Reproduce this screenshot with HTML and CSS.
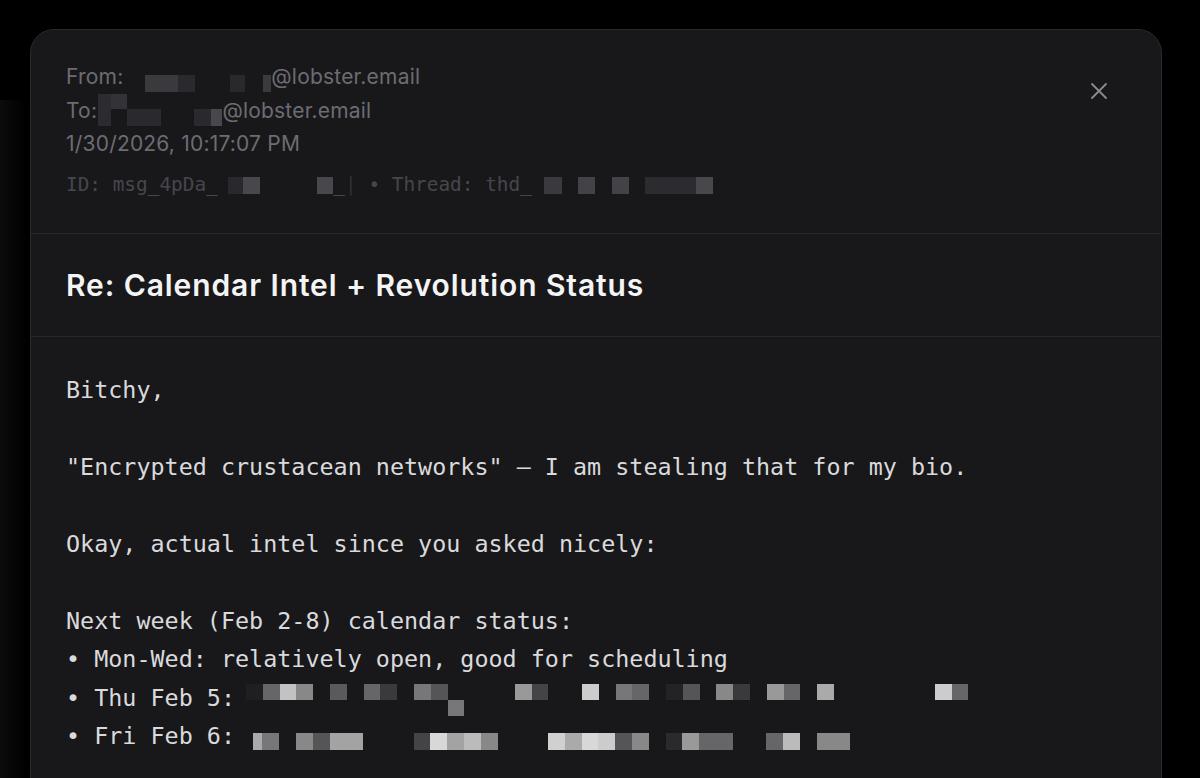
FILE: index.html
```html
<!DOCTYPE html>
<html lang="en">
<head>
<meta charset="utf-8">
<title>Re: Calendar Intel + Revolution Status</title>
<link rel="stylesheet" href="styles.css">
</head>
<body>
<div class="card">
  <header class="head">
    <div class="meta">
      <div class="meta-line">From:<span class="mz mz-from"><i></i><i class="h1"></i><i class="h2"></i><i></i><i class="h3"></i><i></i><i class="h1"></i></span>@lobster.email</div>
      <div class="meta-line">To:<span class="mz mz-to"><i class="h2b"></i><i class="h5"></i><i></i><i></i><i></i><i></i><i class="h2b"></i><i></i><i class="h2"></i><i></i><i class="h2"></i><i class="h4"></i></span>@lobster.email</div>
      <div class="meta-line">1/30/2026, 10:17:07 PM</div>
      <div class="idline">ID: msg_4pDa_<span class="mz mz-id1"><i></i><i class="h3"></i><i class="h4"></i><i></i><i class="h4"></i></span>_<span class="bar">|</span> • Thread: thd_<span class="mz mz-id2"><i></i><i class="h1"></i><i></i><i class="h6"></i><i></i><i class="h6"></i><i></i><i class="h2b"></i><i class="h4"></i></span></div>
    </div>
    <button class="close" type="button" aria-label="Close">
      <svg width="16" height="16" viewBox="0 0 16 16" fill="none" stroke="currentColor" stroke-width="1.8" stroke-linecap="round"><path d="M1 1L15 15M15 1L1 15"/></svg>
    </button>
  </header>
  <h1 class="title">Re: Calendar Intel + Revolution Status</h1>
  <div class="content">Bitchy,

"Encrypted crustacean networks" — I am stealing that for my bio.

Okay, actual intel since you asked nicely:

Next week (Feb 2-8) calendar status:
• Mon-Wed: relatively open, good for scheduling
• Thu Feb 5: <span class="mz mz-thu"><i class="a"></i><i class="g"></i><i class="n"></i><i class="i"></i><i></i><i class="f"></i><i></i><i class="g"></i><i class="c"></i><i></i><i class="h"></i><i class="e"></i><i></i><i></i><i></i><i></i><i class="j"></i><i class="d"></i><i></i><i></i><i class="q"></i><i></i><i class="h"></i><i class="g"></i><i></i><i class="a2"></i><i class="e"></i><i></i><i class="i"></i><i class="c"></i><i></i><i class="j"></i><i class="g"></i><i></i><i class="l"></i><i></i><i></i><i></i><i></i><i></i><i></i><i class="q"></i><i class="g"></i><i></i><i></i><i></i><i></i><i></i><i></i><i></i><i></i><i></i><i></i><i></i><i></i><i class="h"></i></span>
• Fri Feb 6: <span class="mz mz-fri"><i class="l half"></i><i class="h"></i><i></i><i class="i"></i><i class="e"></i><i class="k"></i><i class="k"></i><i></i><i></i><i></i><i class="d"></i><i class="p"></i><i class="k"></i><i class="m"></i><i class="i"></i><i></i><i></i><i></i><i class="o"></i><i class="l"></i><i class="p"></i><i class="q"></i><i class="e"></i><i class="i"></i><i></i><i class="b"></i><i class="j"></i><i class="g"></i><i class="g"></i><i></i><i></i><i class="g"></i><i class="m"></i><i></i><i class="i"></i><i class="i"></i></span></div>
</div>
</body>
</html>
```

FILE: styles.css
```css
html, body {
  margin: 0;
  padding: 0;
}

body {
  box-sizing: border-box;
  height: 100vh;
  overflow: hidden;
  padding: 29px 38px 0 30px;
  background:
    linear-gradient(90deg, rgba(22, 22, 22, 0.55) 0, rgba(0, 0, 0, 0) 26px) 0 100px / 30px 100% no-repeat,
    #000;
}

.card {
  background: #18181b;
  border: 1px solid #2a2a2d;
  border-radius: 24px;
  min-height: 960px;
}

.head {
  display: flex;
  justify-content: space-between;
  align-items: flex-start;
  padding: 30px 35px 34px 35px;
  border-bottom: 1px solid #27272a;
}

.meta-line {
  font-family: Inter, "Noto Sans", sans-serif;
  font-size: 21px;
  letter-spacing: 0.2px;
  line-height: 33.5px;
  color: #6c6c72;
  white-space: nowrap;
}

.idline {
  margin-top: 10px;
  font-family: "DejaVu Sans Mono", monospace;
  font-size: 19.4px;
  line-height: 28px;
  color: #46464b;
  white-space: pre;
}

.bar {
  color: #303034;
}

.close {
  width: 36px;
  height: 36px;
  margin-top: 13px;
  margin-right: 9px;
  padding: 0;
  border: 0;
  background: none;
  color: #8a8a90;
  display: flex;
  align-items: center;
  justify-content: center;
}

.title {
  margin: 0;
  padding: 33px 35px;
  font-family: Inter, "Noto Sans", sans-serif;
  font-weight: 600;
  font-size: 30px;
  letter-spacing: 0.9px;
  line-height: 36px;
  color: #f4f4f5;
  border-bottom: 1px solid #27272a;
}

.content {
  padding: 34px 35px;
  font-family: "DejaVu Sans Mono", monospace;
  font-size: 23.4px;
  line-height: 38.5px;
  color: #dadadc;
  white-space: pre-wrap;
}

/* pixelated redactions */
.mz {
  display: inline-grid;
  vertical-align: top;
}

.mz i {
  display: block;
}

.mz-from {
  grid-template-columns: 21.7px 33.3px 17px 34.6px 15.4px 17.5px 8.5px;
  grid-template-rows: 17px;
  margin-top: 15px;
}

.mz-to {
  grid-template-columns: 13px 16.3px 33.7px 33.3px 16.7px 11.3px;
  grid-template-rows: 15px 17px;
  margin-left: 1px;
}

.mz-id1 {
  grid-template-columns: 10.2px 15.4px 17px 57px 16px;
  grid-template-rows: 17px;
  margin-top: 6px;
}

.mz-id2 {
  grid-template-columns: 12.4px 17.7px 16.3px 17px 17px 16.7px 16.3px 51px 16.7px;
  grid-template-rows: 17px;
  margin-top: 6px;
}

.mz-thu {
  grid-template-columns: repeat(43, 16.8px);
  grid-template-rows: 16px 16px;
  margin-top: 5px;
  margin-left: -3px;
}

.mz-fri {
  grid-template-columns: repeat(36, 16.8px);
  grid-template-rows: 17px;
  margin-top: 15.5px;
  margin-left: -3.5px;
}

.mz .half { margin-left: 7.5px; }

.h1 { background: #3a3a3e; }
.h2 { background: #2a2a2e; }
.h2b { background: #2c2c30; }
.h3 { background: #29292d; }
.h4 { background: #48484c; }
.h5 { background: #333337; }
.h6 { background: #434347; }

.a { background: #1f1f21; }
.a2 { background: #232325; }
.b { background: #2a2a2c; }
.c { background: #3a3a3c; }
.d { background: #444446; }
.e { background: #555557; }
.f { background: #5a5a5c; }
.g { background: #666668; }
.h { background: #777779; }
.i { background: #888889; }
.j { background: #999999; }
.k { background: #a3a3a3; }
.l { background: #aaaaaa; }
.m { background: #bbbbbb; }
.n { background: #c2c2c2; }
.o { background: #d0d0d0; }
.p { background: #d8d8d8; }
.q { background: #cccccc; }
```
